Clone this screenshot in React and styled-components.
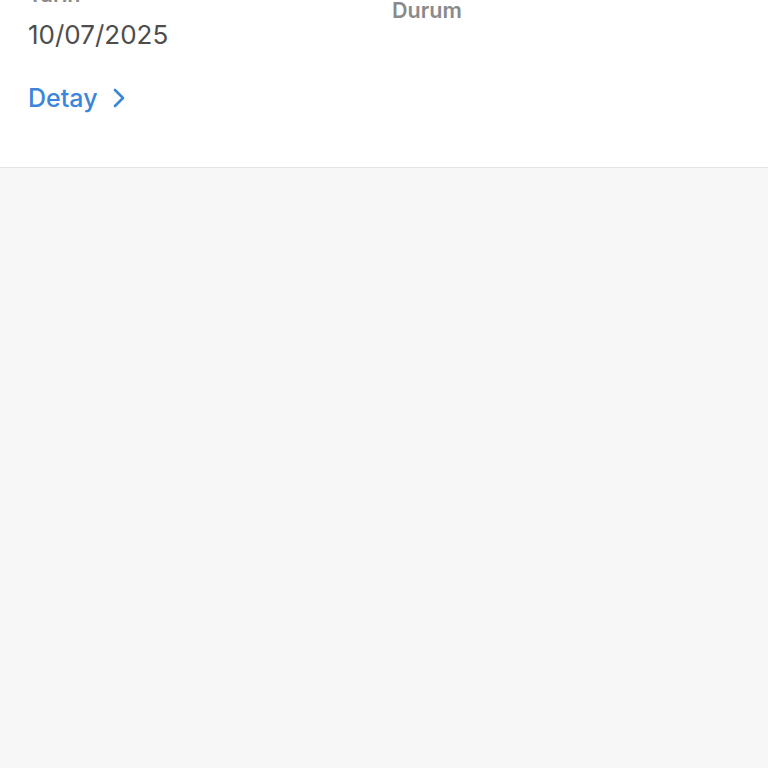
import React from 'react';
import styled, { createGlobalStyle } from 'styled-components';

const GlobalStyle = createGlobalStyle`
  html, body {
    margin: 0;
    padding: 0;
    background: #f7f7f7;
    font-family: Inter, "Noto Sans", "Liberation Sans", sans-serif;
    overflow: hidden;
  }
`;

const Page = styled.div`
  min-height: 768px;
  background: #f7f7f7;
`;

const Card = styled.div`
  background: #fff;
  margin-top: -18px;
  padding: 0 28px 53px;
  border-bottom: 1px solid #e4e4e4;
`;

const InfoGrid = styled.div`
  display: grid;
  grid-template-columns: 364px 1fr;
`;

const Field = styled.div`
  display: flex;
  flex-direction: column;
  margin-top: ${(p) => p.offset || 0}px;
`;

const Label = styled.span`
  font-size: 21.5px;
  line-height: 24px;
  font-weight: 600;
  color: #8a8a8a;
`;

const Value = styled.span`
  margin-top: 13px;
  font-size: 26px;
  line-height: 32px;
  color: #4d4d4d;
`;

const DetailLink = styled.a`
  display: inline-flex;
  align-items: center;
  gap: 15px;
  margin-top: 31px;
  font-size: 25px;
  line-height: 32px;
  font-weight: 500;
  color: #3c86d9;
  text-decoration: none;
  cursor: pointer;
`;

const Chevron = () => (
  <svg width="12" height="20" viewBox="0 0 12 20" fill="none">
    <polyline
      points="2,2 10,10 2,18"
      stroke="#3c86d9"
      strokeWidth="2.6"
      strokeLinecap="round"
      strokeLinejoin="round"
    />
  </svg>
);

export default function App() {
  return (
    <Page>
      <GlobalStyle />
      <Card>
        <InfoGrid>
          <Field>
            <Label>Tarih</Label>
            <Value>10/07/2025</Value>
          </Field>
          <Field offset={16}>
            <Label>Durum</Label>
          </Field>
        </InfoGrid>
        <DetailLink>
          Detay
          <Chevron />
        </DetailLink>
      </Card>
    </Page>
  );
}
